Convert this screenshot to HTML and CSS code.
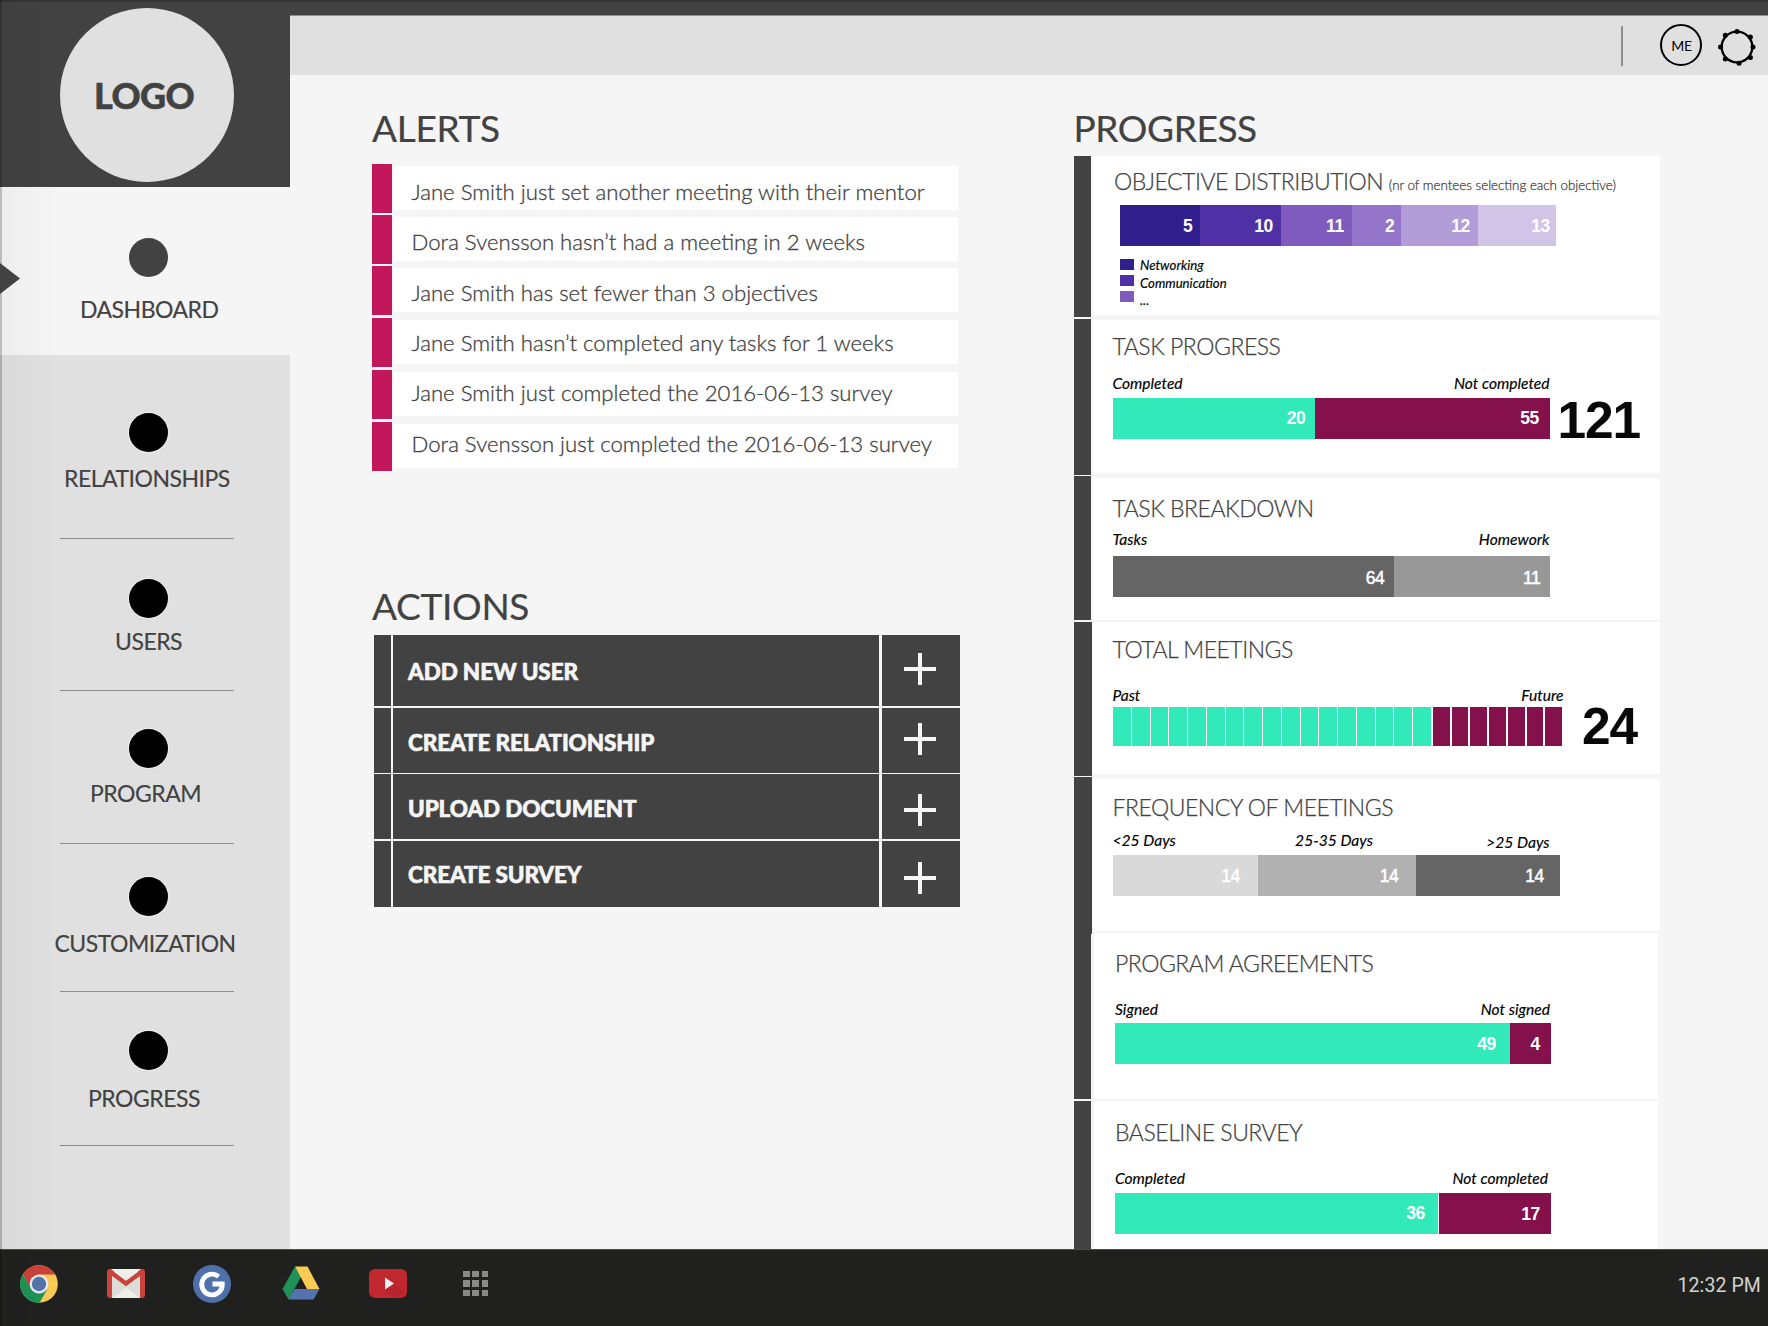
FILE: index.html
```html
<!DOCTYPE html>
<html lang="en">
<head>
<meta charset="utf-8">
<title>Dashboard</title>
<link rel="stylesheet" href="styles.css">
</head>
<body>
<div class="screen">
  <div class="app">
    <aside class="sidebar">
      <div class="brand"><div class="logo">LOGO</div></div>
      <nav class="nav">
        <a class="nav-item dashboard active"><span class="dot"></span><span class="nav-label">DASHBOARD</span></a>
        <a class="nav-item relationships"><span class="dot"></span><span class="nav-label">RELATIONSHIPS</span></a>
        <a class="nav-item users"><span class="dot"></span><span class="nav-label">USERS</span></a>
        <a class="nav-item program"><span class="dot"></span><span class="nav-label">PROGRAM</span></a>
        <a class="nav-item customization"><span class="dot"></span><span class="nav-label">CUSTOMIZATION</span></a>
        <a class="nav-item progress"><span class="dot"></span><span class="nav-label">PROGRESS</span></a>
      </nav>
    </aside>
    <div class="page">
      <header class="topbar">
        <span class="topbar-line"></span>
        <span class="avatar">ME</span>
        <svg class="gear" width="38" height="38" viewBox="0 0 38 38">
          <circle cx="19" cy="19" r="15.3" fill="none" stroke="#000" stroke-width="2.3"/>
          <circle cx="19" cy="3.5" r="2.5"/><circle cx="32.4" cy="9" r="2.5"/><circle cx="35" cy="19" r="2.5"/><circle cx="32.4" cy="29.4" r="2.5"/><circle cx="21" cy="35.3" r="2.5"/><circle cx="7.3" cy="31" r="2.5"/><circle cx="2.5" cy="19" r="2.5"/><circle cx="7.3" cy="7.3" r="2.5"/>
        </svg>
      </header>
      <main class="columns">
        <div class="left">
          <h2>ALERTS</h2>
          <ul class="alerts">
            <li><span class="tag"></span><p>Jane Smith just set another meeting with their mentor</p></li>
            <li><span class="tag"></span><p>Dora Svensson hasn’t had a meeting in 2 weeks</p></li>
            <li><span class="tag"></span><p>Jane Smith has set fewer than 3 objectives</p></li>
            <li><span class="tag"></span><p>Jane Smith hasn’t completed any tasks for 1 weeks</p></li>
            <li><span class="tag"></span><p>Jane Smith just completed the 2016-06-13 survey</p></li>
            <li><span class="tag"></span><p>Dora Svensson just completed the 2016-06-13 survey</p></li>
          </ul>
          <h2 class="actions-title">ACTIONS</h2>
          <div class="actions">
            <div class="action a1"><i></i><b>ADD NEW USER</b><span><svg class="plus" viewBox="0 0 32 32"><path d="M16 0V32M0 16H32"/></svg></span></div>
            <div class="action a2"><i></i><b>CREATE RELATIONSHIP</b><span><svg class="plus" viewBox="0 0 32 32"><path d="M16 0V32M0 16H32"/></svg></span></div>
            <div class="action a3"><i></i><b>UPLOAD DOCUMENT</b><span><svg class="plus" viewBox="0 0 32 32"><path d="M16 0V32M0 16H32"/></svg></span></div>
            <div class="action a4"><i></i><b>CREATE SURVEY</b><span><svg class="plus" viewBox="0 0 32 32"><path d="M16 0V32M0 16H32"/></svg></span></div>
          </div>
        </div>
        <div class="right">
          <h2>PROGRESS</h2>
          <div class="panels">
            <section class="panel objectives">
              <span class="stripe"></span>
              <div class="body">
                <h3>OBJECTIVE DISTRIBUTION <small>(nr of mentees selecting each objective)</small></h3>
                <div class="bar"><span class="v1">5</span><span class="v2">10</span><span class="v3">11</span><span class="v4">2</span><span class="v5">12</span><span class="v6">13</span></div>
                <div class="legend">
                  <div class="swatches"><i class="v1"></i><i class="v2"></i><i class="v3"></i></div>
                  <div class="names"><em>Networking</em><em>Communication</em><em>...</em></div>
                </div>
              </div>
            </section>
            <section class="panel tasks">
              <span class="stripe"></span>
              <div class="body">
                <h3>TASK PROGRESS</h3>
                <div class="labels"><em>Completed</em><em>Not completed</em></div>
                <div class="row"><div class="bar"><span class="green">20</span><span class="wine">55</span></div><strong>121</strong></div>
              </div>
            </section>
            <section class="panel breakdown">
              <span class="stripe"></span>
              <div class="body">
                <h3>TASK BREAKDOWN</h3>
                <div class="labels"><em>Tasks</em><em>Homework</em></div>
                <div class="bar light"><span class="g4">64</span><span class="g3">11</span></div>
              </div>
            </section>
            <section class="panel meetings">
              <span class="stripe"></span>
              <div class="body">
                <h3>TOTAL MEETINGS</h3>
                <div class="labels"><em>Past</em><em>Future</em></div>
                <div class="row">
                  <div class="ticks"><i></i><i></i><i></i><i></i><i></i><i></i><i></i><i></i><i></i><i></i><i></i><i></i><i></i><i></i><i></i><i></i><i></i><i class="next"></i><i class="next"></i><i class="next"></i><i class="next"></i><i class="next"></i><i class="next"></i><i class="next"></i></div>
                  <strong>24</strong>
                </div>
              </div>
            </section>
            <section class="panel frequency">
              <span class="stripe"></span>
              <div class="body">
                <h3>FREQUENCY OF MEETINGS</h3>
                <div class="labels"><em>&lt;25 Days</em><em class="mid">25-35 Days</em><em class="low">&gt;25 Days</em></div>
                <div class="bar light"><span class="g1">14</span><span class="g2">14</span><span class="g4">14</span></div>
              </div>
            </section>
            <section class="panel agreements">
              <span class="stripe"></span>
              <div class="body">
                <h3>PROGRAM AGREEMENTS</h3>
                <div class="labels"><em>Signed</em><em>Not signed</em></div>
                <div class="bar"><span class="green">49</span><span class="wine">4</span></div>
              </div>
            </section>
            <section class="panel survey">
              <span class="stripe"></span>
              <div class="body">
                <h3>BASELINE SURVEY</h3>
                <div class="labels"><em>Completed</em><em>Not completed</em></div>
                <div class="bar"><span class="green">36</span><span class="wine">17</span></div>
              </div>
            </section>
          </div>
        </div>
      </main>
    </div>
  </div>
  <footer class="taskbar">
    <svg class="chrome" width="38" height="38" viewBox="0 0 38 38">
      <circle cx="19" cy="19" r="18.8" fill="#f9cb55"/>
      <path d="M2.9 9.3A18.8 18.8 0 0 1 35.2 9.6H19L11 24Z" fill="#c9423b"/>
      <path d="M2.9 9.3A18.8 18.8 0 0 0 19.5 37.8L27.3 24 19 19 11 23.6Z" fill="#1e9257"/>
      <circle cx="19" cy="19" r="9.4" fill="#e8ecee"/>
      <circle cx="19" cy="19" r="7.2" fill="#5574ad"/>
    </svg>
    <svg class="gmail" width="38" height="29" viewBox="0 0 38 29">
      <rect width="38" height="29" rx="3" fill="#c9423b"/>
      <path d="M5 3H33V29H5Z" fill="#dcddd8"/>
      <path d="M5 29 19 19 33 29Z" fill="#efefea"/>
      <path d="M4 0H34L19 13Z" fill="#efefea"/>
      <path d="M2 2 19 14.5 36 2" fill="none" stroke="#c9423b" stroke-width="4.4" stroke-linejoin="miter"/>
    </svg>
    <svg class="google" width="38" height="38" viewBox="0 0 38 38">
      <circle cx="19" cy="19" r="19" fill="#4e71ac"/>
      <path d="M25.600 11.600A10.300 10.300 0 1 0 29.300 19H19.500" fill="none" stroke="#fff" stroke-width="4.800"/>
    </svg>
    <svg class="drive" width="38" height="34" viewBox="0 0 38 34">
      <path d="M13 0.5 19 11 6.500 33.500 0.500 23Z" fill="#1e9257"/>
      <path d="M13 0.500H25.500L37.500 23H25Z" fill="#f9cb55"/>
      <path d="M12.500 23H37.500L31.500 33.500H6.500Z" fill="#5574ad"/>
    </svg>
    <svg class="youtube" width="38" height="29" viewBox="0 0 38 29">
      <rect width="38" height="29" rx="6" fill="#c1272f"/>
      <path d="M16 19.800 25 14.500 34 23 29 29H24Z" fill="#b8252d"/>
      <path d="M16 8.500V20.500L25 14.500Z" fill="#f1eeee"/>
    </svg>
    <span class="grid"><i></i><i></i><i></i><i></i><i></i><i></i><i></i><i></i><i></i></span>
    <time>12:32 PM</time>
  </footer>
  <div class="edge"></div>
  <div class="pointer"></div>
</div>
</body>
</html>
```
FILE: styles.css
```css
* { box-sizing: border-box; }
body, h2, h3, ul, p { margin: 0; padding: 0; font-weight: inherit; }
body { width: 1768px; height: 1326px; overflow: hidden; font-family: Lato, "Open Sans", sans-serif; color: #424242; background: #f5f5f5; }
.screen { position: relative; width: 1768px; height: 1326px; overflow: hidden; }
.app { display: flex; height: 1249px; overflow: hidden; }

/* Sidebar */
.sidebar { width: 290px; background: #e0e0e0; }
.brand { height: 187px; background: #424242; padding: 7.5px 0 0 60px; }
.logo { width: 174px; height: 174px; border-radius: 50%; background: #e0e0e0; font-weight: 900; font-size: 36px; line-height: 174px; padding-left: 34px; letter-spacing: -.6px; -webkit-text-stroke: .5px; }
.nav-item { display: block; position: relative; font-size: 23px; line-height: 28px; letter-spacing: -.5px; -webkit-text-stroke: .15px; }
.dot { display: block; width: 39px; height: 39px; margin-left: 129px; border-radius: 50%; background: #000; box-shadow: 0 0 0 1px #eee; }
.active { background: #f5f5f5; }
.active .dot { background: #424242; box-shadow: none; }
.nav-label { display: block; white-space: nowrap; }
.nav-item:not(.active)::after { content: ""; position: absolute; left: 60px; bottom: 0; width: 174px; height: 1.500px; background: #8c8c8c; }
.nav-item.users::after, .nav-item.progress::after { bottom: 1px; }
.dashboard { height: 168px; padding-top: 51px; }
.dashboard .nav-label { margin: 18px 0 0 80px; }
.relationships { height: 184px; padding-top: 58px; }
.relationships .nav-label { margin: 12px 0 0 64px; }
.users { height: 153px; padding-top: 39.500px; }
.users .nav-label { margin: 9.500px 0 0 115px; }
.program { height: 152px; padding-top: 37px; }
.program .nav-label { margin: 11px 0 0 90px; }
.customization { height: 148px; padding-top: 32.500px; }
.customization .nav-label { margin: 13.500px 0 0 54.500px; }
.progress { height: 155px; padding-top: 39px; }
.progress .nav-label { margin: 14px 0 0 88px; }

/* Top bar */
.page { width: 1478px; }
.topbar { height: 75px; border-top: 15px solid #424242; background: #e0e0e0; box-shadow: inset 0 1px #8f8f8f; display: flex; align-items: flex-start; }
.topbar-line { width: 2px; height: 40px; margin: 11px 0 0 1331px; background: #8d8d8d; }
.avatar { width: 42px; height: 42px; margin: 9px 0 0 37px; padding-left: 1px; border: 2px solid #000; border-radius: 50%; color: #000; font-size: 14px; line-height: 40px; text-align: center; letter-spacing: -.2px; }
.gear { margin: 13px 0 0 16px; }

/* Columns */
.columns { display: flex; padding: 33px 0 0 82px; }
.left { width: 702px; }
h2 { font-size: 37px; line-height: 40px; height: 40px; white-space: nowrap; letter-spacing: -.3px; -webkit-text-stroke: .2px; }
.alerts { list-style: none; margin-top: 16px; display: grid; grid-template-rows: 51px 51px 52px 52px 52px 49px; font-weight: 300; font-size: 22.160px; -webkit-text-stroke: .3px; }
.alerts li { display: flex; }
.tag { width: 20px; height: 49px; background: #c2185b; }
.alerts p { width: 563.500px; height: 44px; margin: 2px 0 0 2px; padding-left: 17.500px; background: #fff; line-height: 51px; white-space: nowrap; }
.alerts li:nth-child(2) p, .alerts li:nth-child(3) p { line-height: 49px; }
.alerts li:nth-child(n+4) p { line-height: 45px; }
.alerts li:nth-child(5) p { line-height: 41px; }
.alerts li:nth-child(6) p { line-height: 39px; }
.actions-title { margin-top: 115px; }
.actions { width: 586px; margin: 9px 0 0 2px; display: grid; grid-template-rows: 71px 65px 65px 66px; row-gap: 1.700px; }
.action { display: grid; grid-template-columns: 16.500px 486px 78.500px; column-gap: 2.500px; color: #f5f5f5; }
.action > * { background: #424242; }
.action b { font-weight: 900; font-size: 22.500px; line-height: 28px; padding-left: 15px; white-space: nowrap; letter-spacing: -.13px; -webkit-text-stroke: .6px; }
.action span { padding-left: 22px; }
.plus { display: block; width: 32px; height: 32px; stroke: #f5f5f5; stroke-width: 4; }
.a1 b { padding-top: 23px; } .a1 .plus { margin-top: 18px; }
.a2 b { padding-top: 21px; } .a2 .plus { margin-top: 15.500px; }
.a3 b { padding-top: 21px; } .a3 .plus { margin-top: 19.500px; }
.a4 b { padding-top: 20px; } .a4 .plus { margin-top: 21px; }

/* Progress panels */
.right h2 { margin-left: -.5px; letter-spacing: -.4px; }
.panels { margin-top: 8px; display: grid; grid-template-rows: 163px 157px 146px 155px 156px 168px 148px; }
.panel { display: flex; align-items: flex-start; height: 100%; }
.stripe { width: 17px; height: calc(100% - 1px); background: #424242; }
.body { width: 567px; margin-left: 2px; padding-left: 19.500px; background: #fff; white-space: nowrap; }
h3 { font-size: 23px; font-weight: 300; line-height: 24px; height: 24px; letter-spacing: -.48px; -webkit-text-stroke: .25px; }
small { font-size: 13.350px; letter-spacing: 0; }
.labels { width: 437px; height: 20px; display: flex; justify-content: space-between; }
em { font-size: 15.600px; line-height: 20px; color: #000; -webkit-text-stroke: .15px; }
.row { display: flex; }
strong { font: bold 51.500px/41px "Liberation Sans", Arial, sans-serif; letter-spacing: -1.200px; color: #080808; }
.bar { display: flex; height: 41px; font: bold 17.500px/42px "Liberation Sans", Arial, sans-serif; color: #fff; text-align: right; letter-spacing: -.3px; }
.light { font-weight: normal; -webkit-text-stroke: .5px; }
.v1 { background: #311f8d; } .v2 { background: #5031a5; } .v3 { background: #7e5bbd; }
.v4 { background: #9575ca; } .v5 { background: #b29dd8; } .v6 { background: #d1c5e7; }
.green { background: #32eab9; } .wine { background: #85114c; }
.g1 { background: #d9d9d9; } .g2 { background: #b1b1b1; } .g3 { background: #989898; } .g4 { background: #656565; }

.objectives .stripe { height: 161px; }
.objectives .body { height: 159px; padding-top: 12.500px; }
.objectives h3 { margin-left: 1.500px; }
.objectives .bar { margin: 12.500px 0 0 7.500px; }
.objectives .v1 { width: 80px; padding-right: 7.500px; }
.objectives .v2 { width: 81px; padding-right: 8px; }
.objectives .v3 { width: 70.500px; padding-right: 7.500px; }
.objectives .v4 { width: 49.500px; padding-right: 6.500px; }
.objectives .v5 { width: 77px; padding-right: 8px; }
.objectives .v6 { width: 78px; padding-right: 6px; }
.legend { display: flex; margin-left: 7.500px; }
.swatches { padding-top: 13px; width: 20px; }
.swatches i { display: block; width: 13.500px !important; height: 11px; margin-bottom: 5px; }
.names { padding-top: 11px; }
.names em { display: block; font-size: 13.200px; line-height: 17px; height: 17.500px; }

.tasks .body { height: 153px; margin-top: 1px; padding-top: 14px; }
.tasks .labels { margin: 15px 0 5px; }
.tasks .bar { line-height: 40px; }
.tasks .green { width: 202.500px; padding-right: 9.500px; }
.tasks .wine { width: 235px; padding-right: 11px; }
.tasks strong { padding: 1px 0 0 7.500px; line-height: 43px; }

.breakdown .stripe { height: 144px; }
.breakdown .body { height: 142px; margin-top: 1.500px; padding-top: 18.500px; }
.breakdown .labels { margin: 9px 0 7px; }
.breakdown .bar { line-height: 44px; }
.breakdown .g4 { width: 281px; padding-right: 9px; }
.breakdown .g3 { width: 156px; padding-right: 9px; }

.meetings .stripe, .frequency .stripe { width: 18.500px; margin-left: -.5px; }
.meetings .body, .frequency .body { margin-left: 1px; }
.meetings .body { height: 152px; padding-top: 15px; }
.meetings .labels { width: 451px; margin: 24px 0 2px; }
.ticks { width: 450px; height: 39px; margin-left: .5px; display: grid; grid-template-columns: repeat(24, 1fr); }
.ticks i { background: #32eab9; margin-right: 1px; }
.ticks .next { background: #85114c; margin: 0 1px; }
.meetings strong { padding-left: 19px; line-height: 39px; }

.frequency .stripe { height: 157px; }
.frequency .body { height: 152px; margin-top: 2px; padding-top: 16px; }
.frequency .labels { margin: 11px 0 5px; }
.frequency .mid { padding-left: 6px; }
.frequency .low { padding-top: 2px; }
.frequency .bar { margin-left: .5px; line-height: 42px; }
.frequency .g1 { width: 145px; padding-right: 18px; }
.frequency .g2 { width: 157.500px; padding-right: 17px; }
.frequency .g4 { width: 144.500px; padding-right: 16px; }

.agreements .stripe { height: 166px; }
.agreements .body, .survey .body { width: 563.500px; margin-left: 3px; padding-left: 21px; }
.agreements .body { height: 166px; padding-top: 18px; }
.agreements .labels { width: 435px; margin: 24px 0 4px; }
.agreements .green { width: 395px; padding-right: 14px; }
.agreements .wine { width: 41px; padding-right: 11px; }

.survey .stripe { height: 148px; }
.survey .body { height: 148px; padding-top: 19px; }
.survey .labels { width: 433px; margin: 24px 0 5px; }
.survey .bar { line-height: 40px; }
.survey .green { width: 323px; padding-right: 13px; }
.survey .wine { width: 112px; margin-left: 1px; padding-right: 11px; line-height: 42px; }

/* Taskbar */
.taskbar { height: 77px; background: #20211f; border-top: 1px solid #4b4b4a; display: flex; align-items: center; padding: 0 7px 9px 20px; }
.gmail { margin-left: 49px; } .google { margin-left: 48px; } .drive { margin-left: 51px; margin-top: -2px; } .youtube { margin-left: 49px; }
.grid { margin-left: 56px; display: grid; grid-template-columns: repeat(3, 6.500px); gap: 2.800px; }
.grid i { height: 6.500px; background: #898987; }
time { margin: 4px 0 0 auto; color: #d2d2ce; font: 400 19.500px/24px Roboto, "Noto Sans", sans-serif; letter-spacing: .1px; }

/* Window edge shading */
.edge { position: absolute; inset: 0; pointer-events: none; background: linear-gradient(90deg, rgba(0,0,0,.23) 2px, rgba(0,0,0,.03) 2px, transparent 55px) no-repeat, linear-gradient(rgba(0,0,0,.2), rgba(0,0,0,.2)) 0 0 / 100% 2px no-repeat; }
.pointer { position: absolute; left: 0; top: 263px; width: 20px; height: 31px; background: #424242; clip-path: polygon(0 0, 100% 50%, 0 100%); }
```
